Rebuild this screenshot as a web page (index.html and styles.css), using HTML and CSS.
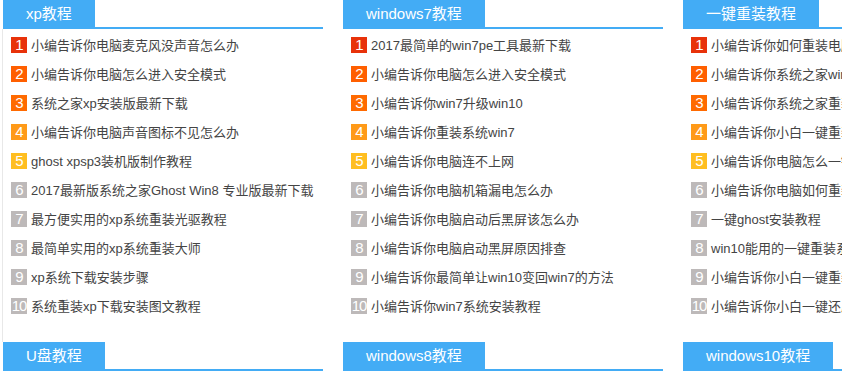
FILE: index.html
```html
<!DOCTYPE html>
<html lang="zh-CN">
<head>
  <meta charset="UTF-8">
  <meta name="viewport" content="width=device-width, initial-scale=1.0">
  <title>教程</title>
  <link rel="stylesheet" href="styles.css">
</head>
<body>
  <div class="wrap">
    <div class="col first">
      <div class="box-head"><span class="tab">xp教程</span></div>
      <ul class="list">
        <li><span class="num n1">1</span><a href="#">小编告诉你电脑麦克风没声音怎么办</a></li>
        <li><span class="num n2">2</span><a href="#">小编告诉你电脑怎么进入安全模式</a></li>
        <li><span class="num n3">3</span><a href="#">系统之家xp安装版最新下载</a></li>
        <li><span class="num n4">4</span><a href="#">小编告诉你电脑声音图标不见怎么办</a></li>
        <li><span class="num n5">5</span><a href="#">ghost xpsp3装机版制作教程</a></li>
        <li><span class="num">6</span><a href="#">2017最新版系统之家Ghost Win8 专业版最新下载</a></li>
        <li><span class="num">7</span><a href="#">最方便实用的xp系统重装光驱教程</a></li>
        <li><span class="num">8</span><a href="#">最简单实用的xp系统重装大师</a></li>
        <li><span class="num">9</span><a href="#">xp系统下载安装步骤</a></li>
        <li><span class="num">10</span><a href="#">系统重装xp下载安装图文教程</a></li>
      </ul>
      <div class="box-head"><span class="tab">U盘教程</span></div>
    </div>

    <div class="col">
      <div class="box-head"><span class="tab">windows7教程</span></div>
      <ul class="list">
        <li><span class="num n1">1</span><a href="#">2017最简单的win7pe工具最新下载</a></li>
        <li><span class="num n2">2</span><a href="#">小编告诉你电脑怎么进入安全模式</a></li>
        <li><span class="num n3">3</span><a href="#">小编告诉你win7升级win10</a></li>
        <li><span class="num n4">4</span><a href="#">小编告诉你重装系统win7</a></li>
        <li><span class="num n5">5</span><a href="#">小编告诉你电脑连不上网</a></li>
        <li><span class="num">6</span><a href="#">小编告诉你电脑机箱漏电怎么办</a></li>
        <li><span class="num">7</span><a href="#">小编告诉你电脑启动后黑屏该怎么办</a></li>
        <li><span class="num">8</span><a href="#">小编告诉你电脑启动黑屏原因排查</a></li>
        <li><span class="num">9</span><a href="#">小编告诉你最简单让win10变回win7的方法</a></li>
        <li><span class="num">10</span><a href="#">小编告诉你win7系统安装教程</a></li>
      </ul>
      <div class="box-head"><span class="tab">windows8教程</span></div>
    </div>

    <div class="col">
      <div class="box-head"><span class="tab">一键重装教程</span></div>
      <ul class="list">
        <li><span class="num n1">1</span><a href="#">小编告诉你如何重装电脑系统</a></li>
        <li><span class="num n2">2</span><a href="#">小编告诉你系统之家win7一键重装</a></li>
        <li><span class="num n3">3</span><a href="#">小编告诉你系统之家重装大师</a></li>
        <li><span class="num n4">4</span><a href="#">小编告诉你小白一键重装系统</a></li>
        <li><span class="num n5">5</span><a href="#">小编告诉你电脑怎么一键重装</a></li>
        <li><span class="num">6</span><a href="#">小编告诉你电脑如何重装系统</a></li>
        <li><span class="num">7</span><a href="#">一键ghost安装教程</a></li>
        <li><span class="num">8</span><a href="#">win10能用的一键重装系统</a></li>
        <li><span class="num">9</span><a href="#">小编告诉你小白一键重装系统</a></li>
        <li><span class="num">10</span><a href="#">小编告诉你小白一键还原系统</a></li>
      </ul>
      <div class="box-head"><span class="tab">windows10教程</span></div>
    </div>
  </div>
</body>
</html>
```

FILE: styles.css
```css
html, body {
  margin: 0;
  overflow: hidden;
}
body {
  font-family: "Liberation Sans", "Noto Sans CJK SC", sans-serif;
  color: #444;
  background: #fff;
}
.wrap {
  display: grid;
  grid-template-columns: 320px 320px 320px;
  gap: 20px;
  width: 1000px;
  padding-left: 3px;
}
.box-head {
  height: 27px;
  border-bottom: 2px solid #43acf5;
}
.tab {
  display: inline-block;
  height: 27px;
  line-height: 27px;
  padding: 0 23px;
  background: #43acf5;
  color: #fff;
  font-size: 15px;
}
.list {
  list-style: none;
  margin: 0;
  padding: 1px 0 22px 8px;
}
.first .list {
  border-left: 1px solid #e8e8e8;
  margin-left: -1px;
}
.list li {
  display: flex;
  align-items: center;
  height: 29px;
  white-space: nowrap;
}
.list a {
  color: #444;
  text-decoration: none;
  font-size: 13px;
}
.num {
  width: 16px;
  height: 16px;
  line-height: 16px;
  margin-right: 4px;
  flex-shrink: 0;
  text-align: center;
  font-size: 15px;
  color: #fff;
  background: #bdb9b9;
  letter-spacing: -1px;
}
.n1 { background: #e8320a; }
.n2 { background: #ff5f00; }
.n3 { background: #ff6a00; }
.n4 { background: #ff9a18; }
.n5 { background: #ffbe20; }
```
